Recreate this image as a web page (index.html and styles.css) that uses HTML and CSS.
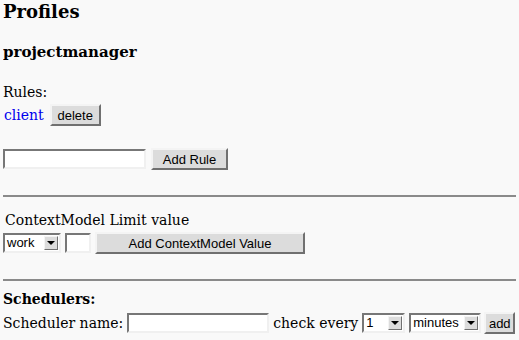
FILE: index.html
```
<!DOCTYPE html>
<html lang="en">
<head>
  <meta charset="UTF-8">
  <title>Profiles</title>
  <link rel="stylesheet" href="styles.css">
</head>
<body>
  <h1>Profiles</h1>
  <h3>projectmanager</h3>

  <div class="rules">
    <div class="label">Rules:</div>
    <div class="rule-row">
      <a href="#" class="rule-link">client</a>
      <button class="btn btn-delete">delete</button>
    </div>
  </div>

  <form class="add-rule">
    <input type="text" class="field field-rule">
    <button type="button" class="btn btn-rule">Add Rule</button>
  </form>

  <hr>

  <div class="context">
    <div class="context-title">ContextModel Limit value</div>
    <div class="context-row">
      <div class="select select-work">work<span class="arrow"></span></div>
      <input type="text" class="field field-limit">
      <button type="button" class="btn btn-context">Add ContextModel Value</button>
    </div>
  </div>

  <hr>

  <div class="schedulers">
    <div class="sched-title">Schedulers:</div>
    <div class="sched-row">
      <span>Scheduler name:</span>
      <input type="text" class="field field-name">
      <span>check every</span>
      <div class="select select-num">1<span class="arrow"></span></div>
      <div class="select select-unit">minutes<span class="arrow"></span></div>
      <button type="button" class="btn btn-add">add</button>
    </div>
  </div>
</body>
</html>
```

FILE: styles.css
```
body {
  margin: 0 3px;
  background-color: #f9f9f9;
  font-family: "DejaVu Serif", serif;
  font-size: 14px;
  color: #000;
}

h1 {
  margin: 1px 0 0;
  font-size: 18px;
  line-height: 22px;
}

h3 {
  margin: 19px 0 0;
  font-size: 15px;
  line-height: 20px;
}

.rules {
  margin-top: 21px;
}

.label {
  line-height: 18px;
}

.rule-row {
  display: flex;
  align-items: center;
  margin-top: 3px;
}

.rule-link {
  color: #0000ee;
  text-decoration: none;
  margin-left: 1px;
  margin-right: 6px;
}

.btn {
  font-family: "Liberation Sans", Arial, sans-serif;
  font-size: 13px;
  background-color: #dcdcdc;
  border: 2px solid;
  border-color: #f4f4f4 #707070 #707070 #f4f4f4;
  padding: 0 4px;
  height: 22px;
  color: #000;
  cursor: pointer;
}

.btn-delete {
  width: 51px;
}

.add-rule {
  display: flex;
  align-items: center;
  margin: 22px 0 0;
}

.field {
  height: 20px;
  box-sizing: border-box;
  border: 2px solid;
  border-color: #777 #f0f0f0 #f0f0f0 #777;
  background-color: #fff;
  padding: 0 2px;
}

.field-rule {
  width: 143px;
  margin-right: 5px;
}

.btn-rule {
  width: 77px;
}

hr {
  margin: 25px 0 0;
  border: 0;
  border-top: 2px solid #8a8a8a;
  height: 0;
}

.context {
  margin-top: 14px;
}

.context-title {
  margin-left: 2px;
  line-height: 18px;
}

.context-row {
  display: flex;
  align-items: center;
  margin-top: 3px;
}

.select {
  position: relative;
  box-sizing: border-box;
  height: 20px;
  border: 2px solid;
  border-color: #777 #f0f0f0 #f0f0f0 #777;
  background-color: #fff;
  font-family: "Liberation Sans", Arial, sans-serif;
  font-size: 13px;
  line-height: 16px;
  padding-left: 2px;
}

.arrow {
  position: absolute;
  right: 1px;
  top: 1px;
  width: 12px;
  height: 12px;
  background-color: #dcdcdc;
  border: 1px solid;
  border-color: #f4f4f4 #707070 #707070 #f4f4f4;
}

.arrow::after {
  content: "";
  position: absolute;
  left: 2px;
  top: 4px;
  border-left: 4px solid transparent;
  border-right: 4px solid transparent;
  border-top: 4px solid #000;
}

.select-work {
  width: 58px;
  margin-right: 4px;
}

.field-limit {
  width: 26px;
  margin-right: 4px;
}

.btn-context {
  width: 210px;
}

.schedulers {
  margin-top: 9px;
}

.sched-title {
  font-weight: bold;
  line-height: 18px;
}

.sched-row {
  display: flex;
  align-items: center;
  margin-top: 4px;
  white-space: nowrap;
}

.field-name {
  width: 142px;
  margin: 0 4px;
}

.select-num {
  width: 43px;
  margin: 0 4px;
}

.select-unit {
  width: 72px;
  margin-right: 3px;
}

.btn-add {
  width: 31px;
  padding: 0 2px;
}
```
